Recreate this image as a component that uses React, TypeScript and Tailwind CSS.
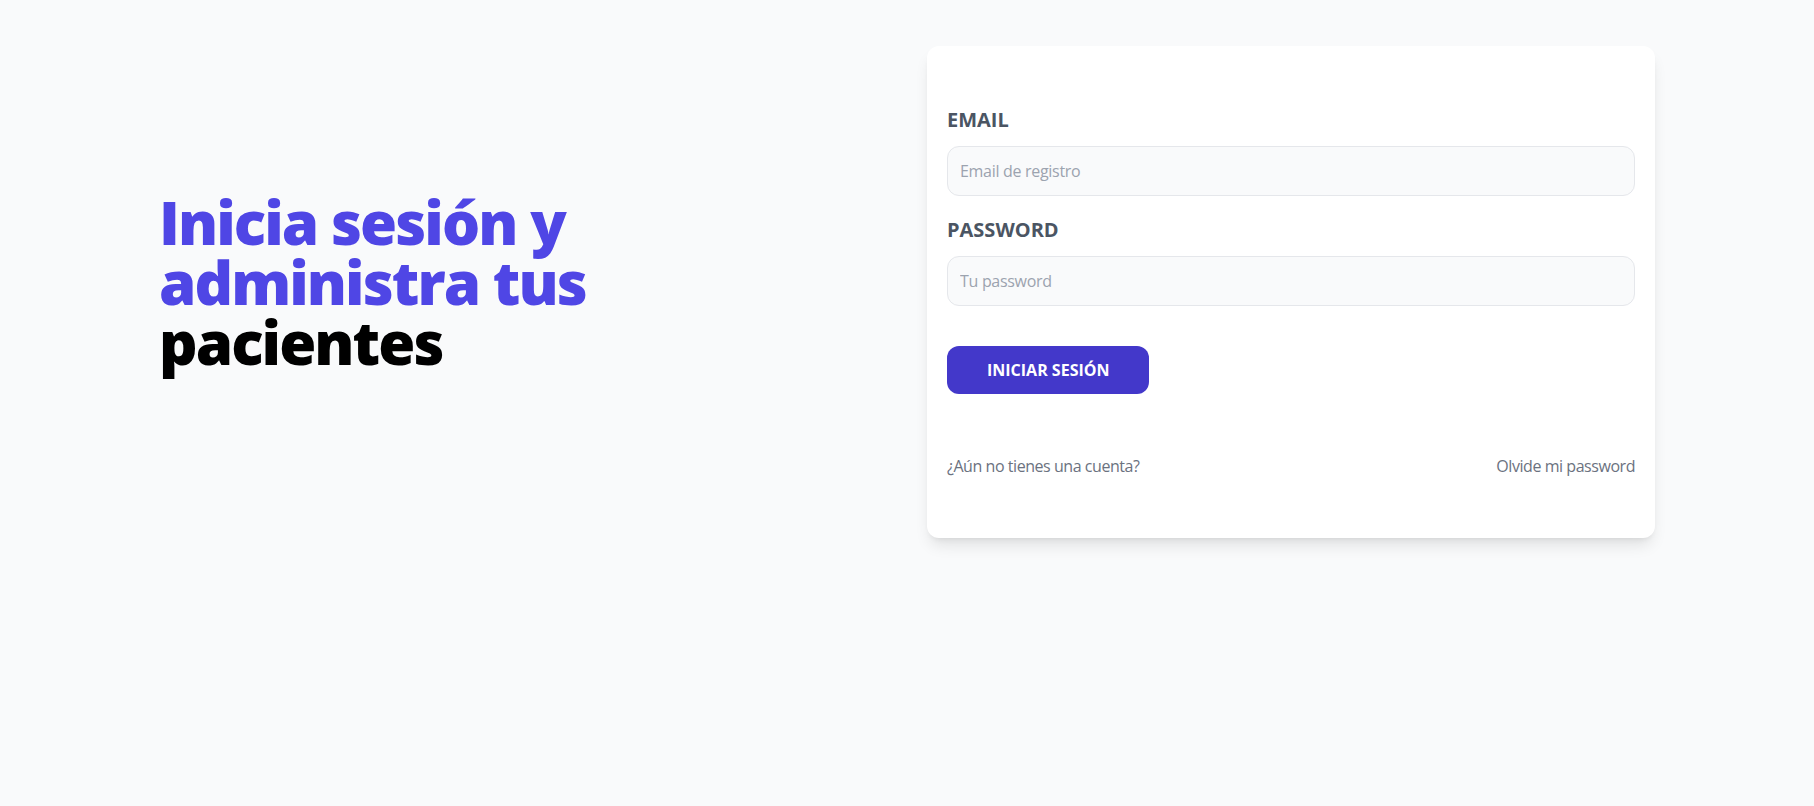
export default function App() {
  return (
    <div
      className="min-h-screen bg-[#f9fafb]"
      style={{ fontFamily: "'Open Sans', 'Noto Sans', sans-serif" }}
    >
      <main className="mx-auto grid max-w-[1536px] grid-cols-2 items-center gap-10 p-5 pt-[26px]">
        <div>
          <h1 className="text-[60px] leading-none font-black tracking-[-0.032em] text-[#4f46e5]">
            Inicia sesión y administra tus <span className="block text-black">pacientes</span>
          </h1>
        </div>

        <div className="mt-5 rounded-xl bg-white px-5 py-10 shadow-lg">
          <form>
            <div className="my-5">
              <label className="block text-xl font-bold uppercase text-[#4b5563]">Email</label>
              <input
                type="email"
                placeholder="Email de registro"
                className="mt-3 w-full rounded-xl border border-[#e5e7eb] bg-[#f9fafb] p-3 text-base tracking-[-0.3px] placeholder:text-[#9ca3af]"
              />
            </div>
            <div className="my-5">
              <label className="block text-xl font-bold uppercase text-[#4b5563]">Password</label>
              <input
                type="password"
                placeholder="Tu password"
                className="mt-3 w-full rounded-xl border border-[#e5e7eb] bg-[#f9fafb] p-3 text-base tracking-[-0.3px] placeholder:text-[#9ca3af]"
              />
            </div>
            <button
              type="button"
              className="mt-5 rounded-xl bg-[#4338ca] px-10 py-3 text-base font-bold uppercase text-white"
            >
              Iniciar sesión
            </button>
          </form>

          <nav className="mt-10 flex justify-between tracking-[-0.45px]">
            <a className="my-5 block text-[#6b7280]">¿Aún no tienes una cuenta?</a>
            <a className="my-5 block text-[#6b7280]">Olvide mi password</a>
          </nav>
        </div>
      </main>
    </div>
  );
}
